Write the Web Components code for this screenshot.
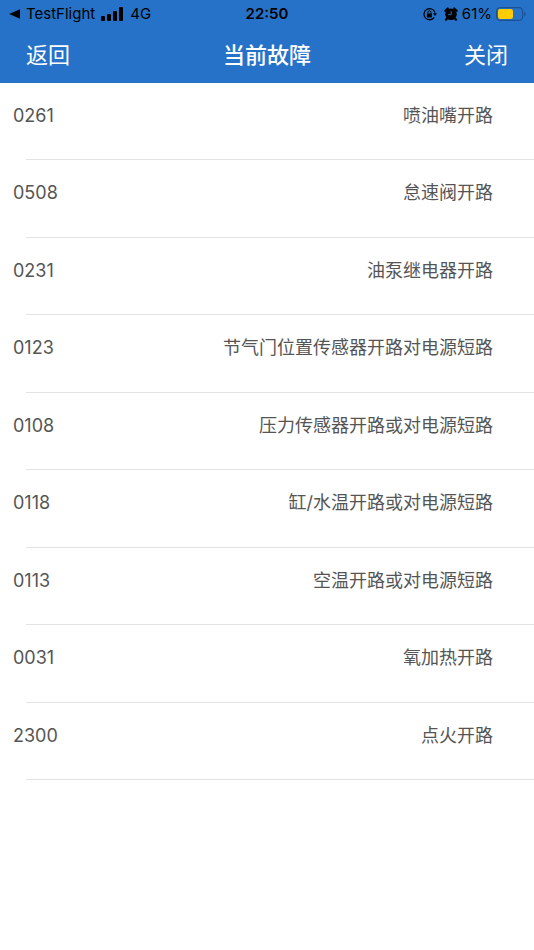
<!DOCTYPE html>
<html lang="zh-CN">
<head>
<meta charset="utf-8">
<meta name="viewport" content="width=device-width, initial-scale=1">
<title>当前故障</title>
<style>
    body {
        margin: 0;
        background: #fff;
        font-family: Inter, 'Noto Sans CJK SC', sans-serif;
    }
</style>
</head>
<body>
    <status-bar back="TestFlight" network="4G" time="22:50" battery="61%"></status-bar>
    <nav-bar>
        <span slot="left">返回</span>
        当前故障
        <span slot="right">关闭</span>
    </nav-bar>
    <fault-list>
        <fault-item code="0261">喷油嘴开路</fault-item>
        <fault-item code="0508">怠速阀开路</fault-item>
        <fault-item code="0231">油泵继电器开路</fault-item>
        <fault-item code="0123">节气门位置传感器开路对电源短路</fault-item>
        <fault-item code="0108">压力传感器开路或对电源短路</fault-item>
        <fault-item code="0118">缸/水温开路或对电源短路</fault-item>
        <fault-item code="0113">空温开路或对电源短路</fault-item>
        <fault-item code="0031">氧加热开路</fault-item>
        <fault-item code="2300">点火开路</fault-item>
    </fault-list>

<script>
const makeTemplate = (html) => {
    const template = document.createElement('template');
    template.innerHTML = html;
    return template;
}

const statusTemplate = makeTemplate(`
    <style>
    :host {
        display: grid;
        grid-template-columns: 1fr auto 1fr;
        align-items: center;
        height: 27px;
        padding: 0 8px;
        background: #2672c9;
        color: #000;
        font-size: 15px;
        line-height: 27px;
    }

    .left, .right {
        display: flex;
        align-items: center;
    }

    .left {
        gap: 6px;
    }

    .right {
        justify-content: flex-end;
        gap: 4px;
    }

    .lock {
        margin-right: 3px;
    }

    a {
        display: flex;
        align-items: center;
        gap: 6px;
        color: inherit;
        text-decoration: none;
    }

    .time {
        font-weight: 600;
    }

    svg {
        display: block;
    }
    </style>

    <div class="left">
        <a href="#">
            <svg width="12" height="10" viewBox="0 0 12 10"><path d="M1.2 5 12 .2v9.6z"/></svg>
            <span id="back"></span>
        </a>
        <svg width="23" height="14" viewBox="0 0 23 14">
            <rect x="0" y="9" width="4" height="5" rx="1"/>
            <rect x="6" y="7" width="4" height="7" rx="1"/>
            <rect x="12" y="4" width="4" height="10" rx="1"/>
            <rect x="18" y="0" width="4" height="14" rx="1"/>
        </svg>
        <span id="network"></span>
    </div>
    <span class="time" id="time"></span>
    <div class="right">
        <!-- rotation lock -->
        <svg class="lock" width="14" height="14" viewBox="0 0 14 14">
            <path d="M11.2 10.4A5.6 5.6 0 1 1 12 5.6" fill="none" stroke="#000" stroke-width="1.3"/>
            <path d="M9.9 6.2H14L12 9z"/>
            <rect x="3.9" y="6.4" width="5" height="4" rx=".6"/>
            <path d="M4.9 6.8V5.2a1.5 1.5 0 0 1 3 0v1.6" fill="none" stroke="#000"/>
        </svg>
        <!-- alarm -->
        <svg width="14" height="14" viewBox="0 0 14 14">
            <circle cx="7" cy="7.3" r="5.8"/>
            <path d="M1.4 3.8 3.8 1.5M12.6 3.8 10.2 1.5M3 11.5 2 12.7M11 11.5l1 1.2" stroke="#000" stroke-width="2.2" stroke-linecap="round"/>
            <path d="M7.2 4v3.7H4.2" fill="none" stroke="#2672c9" stroke-width="1"/>
        </svg>
        <span id="battery"></span>
        <svg width="30" height="14" viewBox="0 0 30 14">
            <rect x=".6" y=".6" width="26" height="12.8" rx="3.6" fill="none" stroke="#1b5190" stroke-width="1.2"/>
            <rect x="2" y="2" width="15" height="10" rx="2.2" fill="#fc0"/>
            <path d="M28.2 4.8c1.9.8 1.9 3.6 0 4.4z" fill="#1b5190"/>
        </svg>
    </div>
`);

class StatusBar extends HTMLElement {
    constructor() {
        super();
        this.attachShadow({mode: 'open'})
        this.shadowRoot.appendChild(statusTemplate.content.cloneNode(true))
        for (const name of ['back', 'network', 'time', 'battery']) {
            this.shadowRoot.getElementById(name).textContent = this.getAttribute(name);
        }
    }
}

const navTemplate = makeTemplate(`
    <style>
    :host {
        display: grid;
        grid-template-columns: 1fr auto 1fr;
        align-items: center;
        height: 56px;
        padding: 0 26px;
        background: #2672c9;
        color: #fff;
    }

    h1, button {
        margin: 0;
        padding: 0;
        font: inherit;
        font-size: 22px;
        line-height: 56px;
    }

    h1 {
        font-weight: 500;
    }

    button {
        justify-self: start;
        border: 0;
        background: none;
        color: inherit;
        cursor: pointer;
    }

    .right {
        justify-self: end;
    }
    </style>

    <button type="button"><slot name="left"></slot></button>
    <h1><slot></slot></h1>
    <button type="button" class="right"><slot name="right"></slot></button>
`);

class NavBar extends HTMLElement {
    constructor() {
        super();
        this.attachShadow({mode: 'open'})
        this.shadowRoot.appendChild(navTemplate.content.cloneNode(true))
    }
}

const listTemplate = makeTemplate(`
    <style>
    :host {
        display: grid;
        grid-auto-rows: 1fr;
        min-height: 697px;
    }
    </style>
    <slot></slot>
`);

class FaultList extends HTMLElement {
    constructor() {
        super();
        this.attachShadow({mode: 'open'})
        this.shadowRoot.appendChild(listTemplate.content.cloneNode(true))
        this.setAttribute('role', 'list');
    }
}

const itemTemplate = makeTemplate(`
    <style>
    :host {
        display: flex;
        flex-direction: column;
        color: #555;
        font-size: 18px;
        line-height: 30px;
    }

    .row {
        flex: 1;
        display: flex;
        justify-content: space-between;
        align-items: flex-start;
        gap: 16px;
        padding: 18px 41px 16px 13px;
    }

    .text {
        text-align: right;
    }

    /* divider starts inset and runs to the right edge */
    .line {
        height: 1px;
        margin-left: 26px;
        background: #e2e2e4;
    }
    </style>

    <div class="row">
        <span class="code"></span>
        <span class="text"><slot></slot></span>
    </div>
    <div class="line"></div>
`);

class FaultItem extends HTMLElement {
    constructor() {
        super();
        this.attachShadow({mode: 'open'})
        this.shadowRoot.appendChild(itemTemplate.content.cloneNode(true))
        this.shadowRoot.querySelector('.code').textContent = this.getAttribute('code');
        this.setAttribute('role', 'listitem');
    }
}

window.customElements.define('status-bar', StatusBar);
window.customElements.define('nav-bar', NavBar);
window.customElements.define('fault-list', FaultList);
window.customElements.define('fault-item', FaultItem);
</script>
</body>
</html>
